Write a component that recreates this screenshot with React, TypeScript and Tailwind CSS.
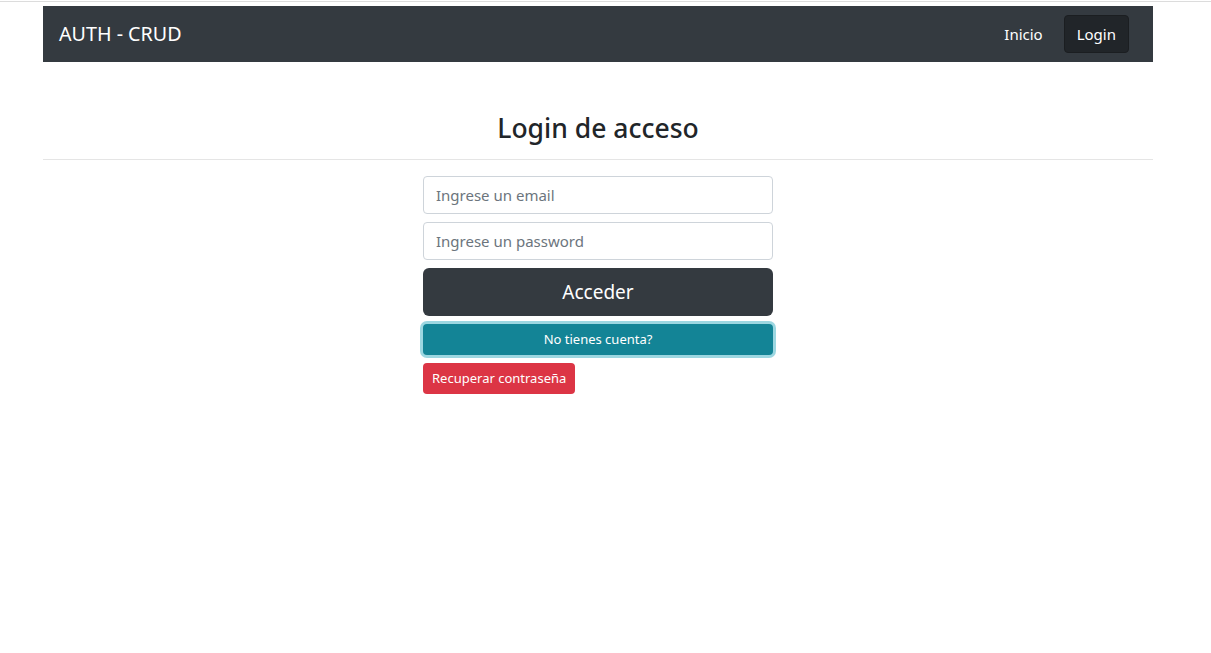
export default function App() {
  return (
    <div className="min-h-screen bg-white font-['Noto_Sans',sans-serif] text-[#212529]">
      <div className="h-px mt-px bg-[#dcdcdc]" />

      <div className="w-[1196px]">
        <div className="w-[1110px] mx-auto mt-1">
          <nav className="h-14 bg-[#343a40] flex items-center justify-between px-4">
            <span className="text-white text-[19.7px]">AUTH - CRUD</span>
            <div className="flex items-center gap-[13px] mr-2">
              <a className="text-white text-[15px] px-2 py-2">Inicio</a>
              <button className="bg-[#212529] text-white text-[15px] h-[38px] px-3 rounded border border-[#1b1e21]">
                Login
              </button>
            </div>
          </nav>

          <h3 className="text-center text-[26.5px] font-medium mt-[47px] mb-[10px]">
            Login de acceso
          </h3>
          <hr className="border-0 border-t border-[#e5e5e5] m-0" />

          <div className="w-[350px] mx-auto mt-4 flex flex-col">
            <input
              placeholder="Ingrese un email"
              className="h-[38px] px-3 border border-[#ced4da] rounded text-[15px] placeholder:text-[#6c757d] outline-none"
            />
            <input
              placeholder="Ingrese un password"
              className="h-[38px] px-3 border border-[#ced4da] rounded text-[15px] placeholder:text-[#6c757d] outline-none mt-2"
            />
            <button className="h-12 mt-2 bg-[#343a40] text-white text-[19px] rounded-md">
              Acceder
            </button>
            <button className="h-[31px] mt-[8px] bg-[#138496] text-white text-[13px] rounded shadow-[0_0_0_3px_rgba(58,176,195,0.5)]">
              No tienes cuenta?
            </button>
            <div className="mt-2">
              <button className="h-[31px] px-[9px] bg-[#dc3545] text-white text-[13px] rounded">
                Recuperar contraseña
              </button>
            </div>
          </div>
        </div>
      </div>
    </div>
  );
}
